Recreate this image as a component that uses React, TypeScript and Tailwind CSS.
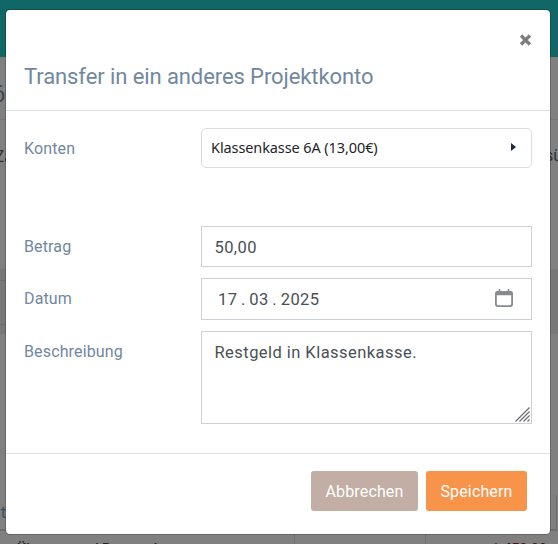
import { clsx } from 'clsx';
import React, { useState } from 'react';

interface FieldRowProps {
  label: string;
  htmlFor: string;
  className?: string;
  children: React.ReactNode;
}

const FieldRow: React.FC<FieldRowProps> = ({ label, htmlFor, className, children }) => (
  <div className={clsx('flex items-start', className)}>
    <label
      htmlFor={htmlFor}
      className="w-[177px] shrink-0 pt-[9px] text-[16px] leading-[24px] tracking-[0.14px] text-[#7187a0]"
    >
      {label}
    </label>
    {children}
  </div>
);

const CalendarIcon = () => (
  <svg width="18" height="18" viewBox="0 0 18 18" fill="none">
    <path d="M4.500 0v3M13.500 0v3" stroke="#868b90" strokeWidth="1.600" />
    <rect x="0.900" y="2.900" width="16.200" height="14.200" rx="2" stroke="#868b90" strokeWidth="1.800" />
    <path d="M0.500 4Q0.500 2 2.500 2h13q2 0 2 2v2.200H0.500z" fill="#868b90" />
  </svg>
);

const ResizeGrip = () => (
  <svg width="15" height="15" viewBox="0 0 15 15" className="pointer-events-none absolute right-[2px] bottom-[2px]">
    <path d="M0.500 14.500L14.500 0.500M4.500 14.500L14.500 4.500M8.500 14.500L14.500 8.500M12.500 14.500L14.500 12.500" stroke="#707070" strokeWidth="1.300" />
  </svg>
);

// Dimmed project page behind the dialog
const PageBehind = () => (
  <div className="flex h-full flex-col bg-[#808080]">
    <div className="h-[57px] shrink-0 bg-[#116666]" />
    <div className="flex h-[63px] shrink-0 items-center border-b border-[#777] text-[24px] text-[#41474f]">
      <span className="-ml-[8px] pt-[11px]">6</span>
    </div>
    <div className="flex h-[149px] shrink-0 justify-between pt-[24px] font-['Noto_Sans'] text-[16px] leading-[24px] text-[#303030]">
      <span className="-ml-[5px]">Za</span>
      <span className="-mr-[4px] font-['Roboto']">sü</span>
    </div>
    <div className="h-[65px] shrink-0 bg-[#787878] pt-[11px]">
      <div className="flex h-[45px]">
        <div className="w-[100px] border-y border-[#6d6d6d]" />
      </div>
    </div>
    <div className="h-[161px] shrink-0" />
    <div className="mr-[1px] h-[36px] shrink-0 border-r border-b-2 border-[#6e6e6e] text-[16px] leading-[36px] text-[#31506a]">
      <span className="-ml-[8px]">nt</span>
    </div>
    <div className="flex h-[40px] shrink-0 text-[14px] leading-[20px]">
      <div className="w-[295px] border-r border-[#6e6e6e] pt-[8px] pl-[17px] font-medium text-[#202020]">
        Übertrag und Personal
      </div>
      <div className="w-[131px] border-r border-[#6e6e6e]" />
      <div className="flex-1 pt-[8px] pr-[11px] text-right font-bold text-[#4c1010]">-1.450,00</div>
    </div>
  </div>
);

export default function App() {
  const [amount, setAmount] = useState('50,00');
  const [description, setDescription] = useState('Restgeld in Klassenkasse.');

  return (
    <div className="relative h-[544px] w-[558px] overflow-hidden font-['Roboto',sans-serif]">
      <PageBehind />

      <div
        role="dialog"
        aria-modal="true"
        className="absolute top-[9px] left-[5px] flex h-[526px] w-[546px] flex-col rounded-[5px] border border-black/20 bg-white bg-clip-padding"
      >
        <header className="h-[101px] shrink-0 border-b border-[#dcdfe6] pr-[18px] pl-[18px]">
          <div className="flex h-[50px] items-start justify-end pt-[24px]">
            <button type="button" aria-label="Schließen">
              <svg width="13" height="12" viewBox="0 0 13 12">
                <path d="M2 1.500L11 10.500M11 1.500L2 10.500" stroke="#7d7d7d" strokeWidth="3.200" />
              </svg>
            </button>
          </div>
          <h5 className="text-[22px] leading-[33px] font-normal tracking-[-0.09px] text-[#7187a0]">
            Transfer in ein anderes Projektkonto
          </h5>
        </header>

        <div className="flex h-[342px] shrink-0 flex-col pt-[17px] pr-[18px] pl-[18px] text-[#495057]">
          <FieldRow label="Konten" htmlFor="account" className="h-[98px]">
            <button
              id="account"
              type="button"
              className="flex h-[40px] flex-1 items-center justify-between rounded-[5px] border border-[#dcdcdc] pr-[15px] pb-[2px] pl-[9px] font-['Noto_Sans'] text-[14.5px] text-[#212529]"
            >
              <span className="pt-[2px] tracking-[-0.1px]">Klassenkasse 6A (13,00€)</span>
              <svg width="5" height="8" viewBox="0 0 5 8">
                <path d="M0 0L5 4L0 8z" fill="#1f2937" />
              </svg>
            </button>
          </FieldRow>

          <FieldRow label="Betrag" htmlFor="amount" className="h-[52px]">
            <input
              id="amount"
              value={amount}
              onChange={(e) => setAmount(e.target.value)}
              className="h-[41px] min-w-0 flex-1 border border-[#ced1da] px-[12.5px] pt-[2px] text-[16.5px] tracking-[0.4px] outline-none"
            />
          </FieldRow>

          <FieldRow label="Datum" htmlFor="date" className="h-[53px]">
            <div
              id="date"
              className="flex h-[42px] flex-1 items-center justify-between border border-[#ced1da] pr-[18px] pl-[16px] text-[16.5px] tracking-[0.4px]"
            >
              <div className="flex pt-[2px]">
                <span>17</span>
                <span className="w-[12px] text-center">.</span>
                <span>03</span>
                <span className="w-[12px] text-center">.</span>
                <span>2025</span>
              </div>
              <span className="-mt-[3px]">
                <CalendarIcon />
              </span>
            </div>
          </FieldRow>

          <FieldRow label="Beschreibung" htmlFor="description">
            <div className="relative h-[93px] flex-1">
              <textarea
                id="description"
                value={description}
                onChange={(e) => setDescription(e.target.value)}
                className="block h-full w-full resize-none border border-[#ced1da] px-[12.5px] py-[8px] text-[16.5px] leading-[25px] tracking-[0.45px] outline-none"
              />
              <ResizeGrip />
            </div>
          </FieldRow>
        </div>

        <footer className="flex flex-1 items-start justify-end gap-[8px] border-t border-[#dee2e6] pt-[17px] pr-[23px] text-[16px] tracking-[0.14px] text-white">
          <button type="button" className="h-[40px] w-[107px] rounded-[3px] bg-[#c2aea4] pt-[2px]">
            Abbrechen
          </button>
          <button type="button" className="h-[40px] w-[101px] rounded-[3px] bg-[#f8934a] pt-[2px]">
            Speichern
          </button>
        </footer>
      </div>
    </div>
  );
}
